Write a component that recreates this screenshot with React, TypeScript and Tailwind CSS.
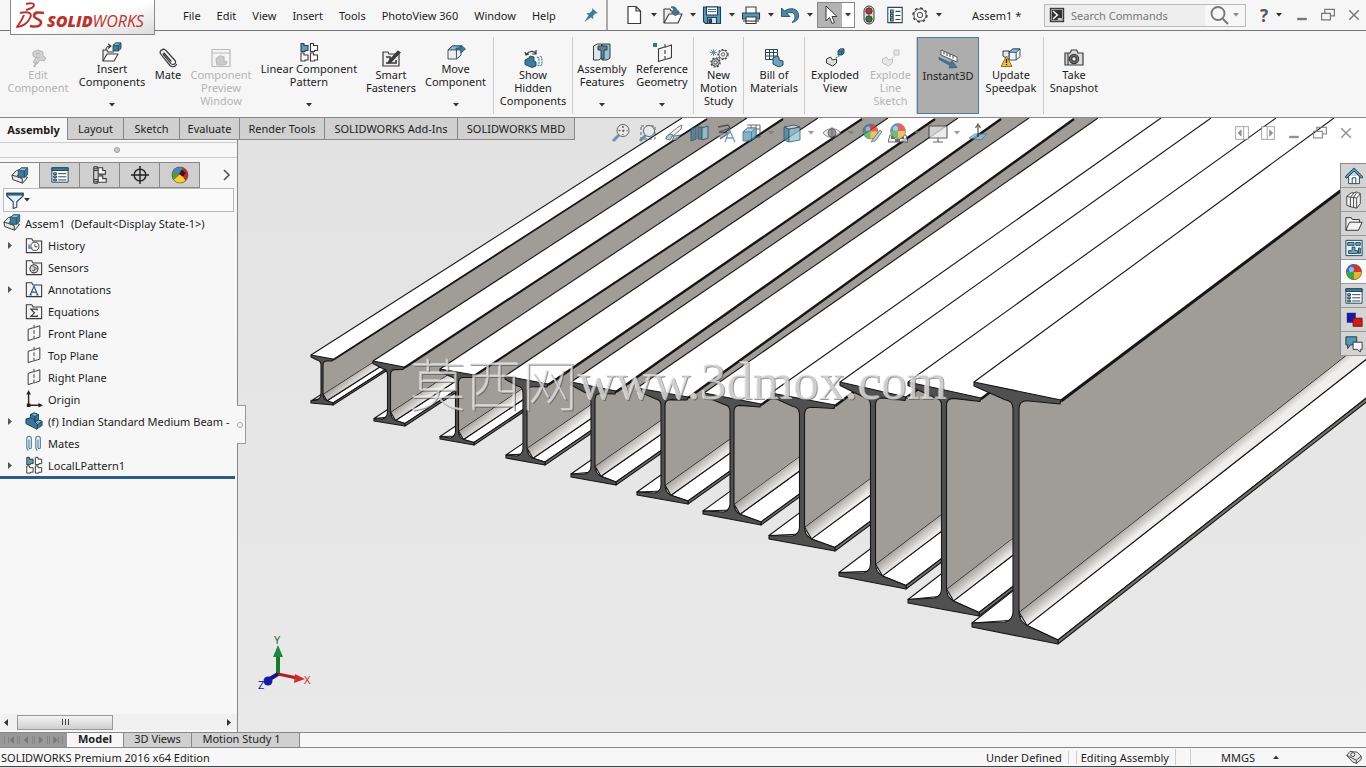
import type { ReactNode } from "react";

const INK = "#3a3a3a";
const BLUE = "#3d7c9c";
const SKY = "#8fc1d8";

// Small parts that several icons share
const gear = (cx: number, cy: number, r: number, fill = "#ddd") => (
  <g>
    <circle cx={cx} cy={cy} r={r} fill="none" stroke={INK} strokeWidth="1.200" strokeDasharray="1.800 1.800" />
    <circle cx={cx} cy={cy} r={r - 0.8} fill={fill} stroke={INK} strokeWidth=".8" />
    <circle cx={cx} cy={cy} r={r / 3} fill="#f6f6f6" stroke={INK} strokeWidth=".8" />
  </g>
);

const cube = (x: number, y: number, s: number, fill = BLUE) => (
  <g stroke="#24495c" strokeWidth=".9" strokeLinejoin="round">
    <path d={`M${x} ${y + s * 0.3}l${s * 0.35} ${-s * 0.3}h${s * 0.65}v${s * 0.7}l${-s * 0.35} ${s * 0.3}h${-s * 0.65}z`} fill={fill} />
    <path d={`M${x} ${y + s * 0.3}h${s * 0.65}l${s * 0.35} ${-s * 0.3}h${-s * 0.65}z`} fill={SKY} />
    <path d={`M${x + s * 0.65} ${y + s * 0.3}v${s * 0.7}`} />
  </g>
);

const ball = (cx: number, cy: number, r: number) => (
  <g>
    <circle cx={cx} cy={cy} r={r} fill="#d8322c" />
    <path d={`M${cx} ${cy}V${cy - r}A${r} ${r} 0 0 0 ${cx - r} ${cy}z`} fill="#3470c4" />
    <path d={`M${cx} ${cy}H${cx - r}A${r} ${r} 0 0 0 ${cx} ${cy + r}z`} fill="#3fa644" />
    <path d={`M${cx} ${cy}V${cy + r}A${r} ${r} 0 0 0 ${cx + r} ${cy}z`} fill="#e5b52b" />
    <circle cx={cx - r / 3} cy={cy - r / 3} r={r / 3} fill="#fff" opacity=".5" />
    <circle cx={cx} cy={cy} r={r} fill="none" stroke="#555" strokeWidth=".6" />
  </g>
);

const folder = (
  <path d="M1.500 18.500V3h6l1.500 2.500h9.500v13z" fill="#f4f4f4" stroke={INK} strokeWidth="1.200" />
);

const plane = (
  <g fill="none" stroke={INK} strokeWidth="1.100">
    <path d="M8 4.500L3.500 6v12.500L8 17M12 3.500L16.500 2v12.500L12 16" />
    <path d="M10 1v18" strokeDasharray="4 2" />
    <path d="M8 4.500l4-1M8 17l4-1" strokeDasharray="1.500 1" />
  </g>
);

const patternCell = (x: number, y: number, fill: string) => (
  <path d={`M${x} ${y}h3v2h4v5h-3v1h-4z`} fill={fill} stroke={INK} strokeWidth="1.1" />
);

const assembly = (
  <g strokeLinejoin="round" strokeWidth="1.1" stroke={INK}>
    <path d="M1 9l5-5 3.500-1v6l9 2.500-5.500 6.500L2 14z" fill="#e8e8e8" />
    <path d="M1 9l5 1.500 6.500 2.500v5M6 10.500l3-3" fill="none" />
    {cube(8, 1, 10.5)}
  </g>
);

const icons: Record<string, ReactNode> = {
  newDoc: <path d="M4 1.500h8l4.500 4.500v12.500H4zM12 1.500v4.500h4.500" fill="#fff" stroke={INK} strokeWidth="1.200" />,
  open: (
    <g stroke={INK} strokeWidth="1.100" strokeLinejoin="round">
      <path d="M1 18V4h6l1 2h7v4" fill="#eee" />
      <path d="M1 18l5-9h13l-4 9z" fill="#fafafa" />
      <path d="M8 2c4-1 6 1 6 5h2.500l-4 4-4-4H11c0-3-1-4-3-5z" fill={BLUE} stroke="#24495c" strokeWidth=".7" />
    </g>
  ),
  save: (
    <g stroke="#1f3f55" strokeWidth="1.100">
      <path d="M1.500 2h17v16.500H3.500l-2-2z" fill="#5d95b4" />
      <path d="M4.500 2h11v8h-11z" fill="#fff" />
      <path d="M6 4.500h8M6 6.500h8" stroke={BLUE} />
      <path d="M5.500 12.500h9v6h-9z" fill="#d7e4ea" />
      <path d="M7 14h2.500v4H7z" fill="#1f3f55" />
    </g>
  ),
  print: (
    <g stroke={INK} strokeWidth="1.100">
      <path d="M5 8V2h10v6" fill="#fff" />
      <path d="M1.500 8h17v6h-17z" fill="#4d9abb" />
      <path d="M5 12h10v6.500H5z" fill="#fff" />
      <path d="M2 16h16" />
    </g>
  ),
  undo: <path d="M1.500 3v8.500H10L7 8.500c4-2.500 8-.5 8 3.500 0 2-1 4-3 5.500 5-1 7-4 6.500-8C17.800 4 11 1.500 4.500 6z" fill="#4d87a8" stroke="#264d63" strokeWidth=".9" />,
  cursor: <path d="M6 1v15l3.500-3.500 2.500 6 2.500-1-2.500-6H17z" fill="#fff" stroke={INK} strokeWidth="1" />,
  traffic: (
    <g stroke={INK} strokeWidth="1">
      <rect x="5" y="1" width="10" height="18" rx="5" fill="#dcdcdc" />
      <circle cx="10" cy="6" r="3.200" fill="#c4302b" />
      <circle cx="10" cy="14" r="3.200" fill="#2f7d3b" />
    </g>
  ),
  options: (
    <g stroke="#27475c" strokeWidth="1.200" fill="#fff">
      <path d="M2 1.500h16v17H2z" />
      <path d="M5 4.500h3v3H5zM5 9h3v3H5zM5 13.500h3v3H5z" fill={SKY} />
      <path d="M10.500 6h5.500M10.500 10.500h5.500M10.500 15h5.500" />
    </g>
  ),
  gear: (
    <g fill="none" stroke={INK}>
      <circle cx="10" cy="10" r="7.800" strokeWidth="1.500" strokeDasharray="3 3.120" />
      <circle cx="10" cy="10" r="6.800" strokeWidth="1" fill="#f6f6f6" />
      <circle cx="10" cy="10" r="3" strokeWidth="1" />
    </g>
  ),
  pin: <path d="M12 1l7 6-3 .5-3.500 4 .5 4-3-2.500L1.500 19 7 10.500 4 8l4-.5 4-3.500z" fill={BLUE} stroke="#24607c" strokeWidth=".6" />,
  prompt: (
    <g>
      <path d="M1 1h18v18H1z" fill="#333" />
      <path d="M3 3h14v14H3z" fill="none" stroke="#eee" strokeWidth=".8" />
      <path d="M5 5l5.500 5L5 15M11 15h5" fill="none" stroke="#fff" strokeWidth="1.800" />
    </g>
  ),
  search: <path d="M14 14l5 5M9 2a6.500 6.500 0 1 1 0 13a6.500 6.500 0 0 1 0-13z" fill="none" stroke="#777" strokeWidth="1.900" />,
  editComponent: (
    <g fill="#d2d2d2" stroke="#b5b5b5">
      <path d="M5 4l5-2 5 2v4l3 2-2 3-4-1-3 4-4-2 3-4-3-2z" />
      <path d="M8 6l4-1M8 9l4 1" />
      <path d="M6 19l3-5" strokeWidth="2" />
    </g>
  ),
  insert: (
    <g stroke={INK} strokeWidth="1.100" strokeLinejoin="round">
      <path d="M1 19V8h4l1 2h6" fill="#eee" />
      <path d="M1 19l4-7h11l-4 7z" fill="#fff" />
      <path d="M4 8c0-3 2-4 4-4M6 2l3 2-3 2.500" fill="none" />
      {cube(11, 1, 8)}
    </g>
  ),
  mate: (
    <path d="M5 6l8 9.500a2.500 2.500 0 0 0 4-3L8 2.500a3.200 3.200 0 0 0-5 4l9 11a4 4 0 0 0 6.500-1M6 5l7 8" fill="none" stroke={INK} strokeWidth="1.200" strokeLinecap="round" />
  ),
  preview: (
    <g stroke="#bbb" strokeWidth="1.200" fill="#f4f4f4">
      <path d="M1 1.500h18v17H1zM1 5h18" />
      <path d="M5 11l4-3 4 1v4l3 1-2 3H6z" fill="#ccc" />
    </g>
  ),
  pattern: (
    <g>
      {patternCell(2, 1.5, "#5f9cae")}
      {patternCell(11.500, 1.5, "#fff")}
      {patternCell(2, 11, "#fff")}
      {patternCell(11.500, 11, "#fff")}
    </g>
  ),
  fasteners: (
    <g stroke={INK} strokeWidth="1.200" fill="none">
      <path d="M2 18V4h5l1 2h10v12z" fill="#eee" />
      <path d="M5 9h4v3M5 15h10v-3" strokeWidth="1.600" />
      <path d="M8 13L17 3l2 1.500-9 9.500-3 1z" fill={INK} />
    </g>
  ),
  move: (
    <g>
      {cube(2, 4, 13, "#eee")}
      <path d="M10 6h5V3l4.500 4-4.500 4V8h-5z" fill={BLUE} stroke="#24495c" strokeWidth=".7" />
    </g>
  ),
  showHidden: (
    <g>
      <path d="M3 7c2-4 8-5 10-1M13 2v4H9M2 4l1 3 3-1" fill="none" stroke={INK} strokeWidth="1.200" />
      <path d="M2 12l4-2 1-2 4 1v4l2 1v4l-4 1.500-7-3z" fill={BLUE} stroke="#24495c" />
      <path d="M14 9l2 1v7l-2 1.500M17.500 8l1.500 2v6l-1.500 2" fill="none" stroke={BLUE} strokeWidth="1.200" strokeDasharray="2 1" />
    </g>
  ),
  features: (
    <g stroke={INK} strokeWidth="1">
      <path d="M1.500 4l4-2h4v14l-3 2h-5z" fill="#dfe8ec" />
      <path d="M10 2h8v14l-3 2h-5z" fill="#9cc0d0" />
      <path d="M6 4h9v4h-3v9H9V8H6z" fill="#4d87a8" />
    </g>
  ),
  geometry: (
    <g>
      <path d="M1 1h4v4H1z" fill="#2f7f78" />
      <g transform="translate(3 1)">{plane}</g>
    </g>
  ),
  motion: (
    <g>
      {gear(14, 6.5, 5, "#f6f6f6")}
      {gear(6.500, 14.500, 4.6, "#bbb")}
      <path d="M4.500 1v7M1 4.500h7M2 2l5 5M7 2L2 7" stroke={BLUE} strokeWidth=".8" />
    </g>
  ),
  bom: (
    <g stroke="#27475c" strokeWidth="1">
      <path d="M1.500 1.500h12v10h-12zM1.500 4.500h12M1.500 8h12M5.500 1.500v10M9.500 1.500v10" fill="#fff" />
      <path d="M9 10l4-2 2 1v3l4 1v4l-4 2-6-3z" fill="#6fa3bb" />
    </g>
  ),
  exploded: (
    <g stroke={INK} strokeWidth="1">
      <path d="M1.500 11l4-2 2 3 4-1v4l-4 3-6-3z" fill="#ddd" />
      {cube(13, 1, 6)}
      <path d="M11 10l4-3" stroke={BLUE} strokeDasharray="1.500 1" strokeWidth="1.500" />
    </g>
  ),
  explodeLine: (
    <g stroke="#c2c2c2" fill="#e6e6e6">
      <path d="M1.500 11l4-2 2 3 4-1v4l-4 3-6-3zM13 2h5v5h-5z" />
      <path d="M11 10l4-3" strokeDasharray="1.500 1" />
    </g>
  ),
  instant: (
    <g>
      <path d="M3 1l16 7v5L3 6z" fill="#fff" stroke={INK} strokeWidth=".8" />
      <path d="M6 2.500v3M9 4v3M12 5v3M15 6.500v3" stroke={INK} strokeWidth="1" />
      <path d="M1 8.500l12 5.500 1-2.500 5 7-8 .5 1-2.500L1 10.500z" fill={BLUE} stroke="#24495c" strokeWidth=".5" />
    </g>
  ),
  speedpak: (
    <g>
      {cube(8, 1, 11, "#eef4f7")}
      <path d="M2 8V3h6v9z" fill="#dfe9ee" stroke={INK} />
      <path d="M5.500 8L11 18.500H0z" fill="#f3c037" stroke="#7d5a00" strokeWidth=".8" />
      <path d="M5.500 11v4M5.500 16v1.200" stroke="#222" strokeWidth="1.300" />
    </g>
  ),
  camera: (
    <g stroke={INK} strokeWidth="1.200">
      <path d="M1 5h5l1.500-3h5L14 5h5v12H1z" fill="#ddd" />
      <circle cx="10" cy="11" r="4.600" fill="#777" />
      <circle cx="10" cy="11" r="2.300" fill="#eee" />
      <path d="M4 5v12" />
    </g>
  ),
  assembly,
  property: (
    <g stroke="#27475c" strokeWidth="1.100" fill="#fff">
      <path d="M1 2h18v16H1z" />
      <path d="M1 2h18v3H1z" fill={BLUE} />
      <path d="M3 7.500h3v2H3zM3 11h3v2H3zM3 14.500h3v2H3z" fill={SKY} />
      <path d="M8 8.500h9M8 12h9M8 15.500h9" />
    </g>
  ),
  config: (
    <g stroke={INK} strokeWidth="1.200" fill="#f4f4f4">
      <path d="M3 1v18M3 5h5M3 15h5M3 1h4v2H3M3 17h4v2H3" />
      <path d="M8 2h5v3h3v4H8zM8 11h5v3h4v4H8z" />
    </g>
  ),
  target: (
    <g stroke="#222" strokeWidth="1.600" fill="none">
      <circle cx="10" cy="10" r="6.500" />
      <path d="M10 0v20M0 10h20" />
    </g>
  ),
  display: (
    <g>
      <circle cx="10" cy="10" r="9" fill="#c4262e" />
      <path d="M10 1a9 9 0 0 0-8.500 6L6 9l6-1 1-6.500z" fill="#4c86b8" />
      <path d="M1.500 7A9 9 0 0 0 3 15.500L9 9z" fill="#5a9a3c" />
      <path d="M3 15.500L11 8l5 8.500A9 9 0 0 1 3 15.500z" fill="#f5d02e" />
      <path d="M9 9l3-5 4.500 4L13 12z" fill="#3a1518" />
      <circle cx="10" cy="10" r="9" fill="none" stroke="#555" strokeWidth=".6" />
    </g>
  ),
  filter: (
    <g stroke="#27475c" strokeWidth="1.200">
      <path d="M1 2.500h18v3L12 12v6l-4 1.500V12L1 5.500z" fill="#e3f0f5" />
      <path d="M1 2.500h18v2H1z" fill={BLUE} />
    </g>
  ),
  history: (
    <g>
      {folder}
      <circle cx="11" cy="11.500" r="4.500" fill="#fff" stroke={INK} />
      <path d="M11 9v3h3" fill="none" stroke={INK} />
      <path d="M4.500 9.500v4h4" fill="none" stroke={BLUE} strokeWidth="1.500" />
    </g>
  ),
  sensors: (
    <g>
      {folder}
      <circle cx="10" cy="12" r="4.500" fill="#ddd" stroke={INK} strokeWidth="1.200" />
      <path d="M8.500 9.500l3 1-1.500 4-2-1M12 13l1.500-2" fill="none" stroke={INK} />
    </g>
  ),
  annotations: (
    <g>
      {folder}
      <path d="M6 16.500l4-9.500 4 9.500M7.500 13.500h5M5 16.500h2.500M12.500 16.500H15" fill="none" stroke="#2b5c8c" strokeWidth="1.300" />
    </g>
  ),
  equations: (
    <g>
      {folder}
      <path d="M13.500 9.500V8h-7l4 4-4 4h7v-1.500" fill="none" stroke={INK} strokeWidth="1.300" />
    </g>
  ),
  plane,
  origin: (
    <g>
      <path d="M4 3v14h12" fill="none" stroke="#3a2020" strokeWidth="1.600" />
      <path d="M4 0l2.500 5h-5zM20 17l-5-2.500v5zM2 15h4v4H2z" fill="#222" />
    </g>
  ),
  part: (
    <g stroke="#1f4257" strokeWidth="1" strokeLinejoin="round">
      <path d="M1 8l5-1.500V3l4-2 5 2v6l4 1.500V15l-6 4-12-6z" fill="#3a7797" />
      <path d="M6 3l5 2 4-2-5-2zM11 11l4-2 4 1.500-5 3.500z" fill="#7fb0c6" />
      <path d="M1 8l5-1.500 5 2V11l3 3-1 5M11 5v6" fill="none" />
    </g>
  ),
  mates: (
    <g fill="none" stroke="#3f7d8f" strokeWidth="1.200">
      <path d="M2 14V5a2.500 2.500 0 0 1 5 0v10a1.300 1.300 0 0 1-2.600 0V6M2 14c0 3 1 4 2 4" />
      <path d="M12 14V5a2.500 2.500 0 0 1 5 0v10a1.300 1.300 0 0 1-2.600 0V6M12 14c0 3 1 4 2 4" />
    </g>
  ),
  zoomFit: (
    <g>
      <path d="M8 12L2 18" stroke={BLUE} strokeWidth="3" />
      <circle cx="12" cy="7.500" r="6" fill="#eee" stroke={INK} />
      <path d="M12 3v9M7.500 7.500h9" stroke={INK} strokeDasharray="2 2" strokeWidth="1.500" />
    </g>
  ),
  zoomArea: (
    <g fill="none">
      <path d="M3 3h14v13H3z" stroke={INK} strokeDasharray="3 2" />
      <path d="M8 12L2 18" stroke={BLUE} strokeWidth="3" />
      <circle cx="11" cy="8" r="5.500" fill="#e4eef2" stroke={INK} />
    </g>
  ),
  prevView: (
    <g stroke={INK} strokeWidth=".9">
      <path d="M2 14L14 4l4-2-1 4-8 7z" fill="#f0f0f0" />
      <path d="M2 14l4-3 3 1-3 5-4-1zM10 13l7-1-4 5-5 1z" fill="#8fc1d8" />
    </g>
  ),
  section: (
    <g stroke="#24495c">
      <path d="M1 6l5-2v12l-5 2zM8 4h4v12H8z" fill={BLUE} />
      <path d="M12 5l6-2v12l-6 2z" fill={SKY} />
    </g>
  ),
  annoView: (
    <g fill="none" stroke={INK} strokeWidth="1.300">
      <path d="M2 4l10-2 2 3L3 9l10 1-9 6" fill="#999" />
      <path d="M9 19l4.500-12L19 19M11 15h6" stroke={BLUE} />
    </g>
  ),
  orient: (
    <g>
      <path d="M5 2h13v12H5M9 2v5M14 2v12M14 6h4" fill="none" stroke={INK} />
      {cube(1, 5, 13, "#5b9ab8")}
    </g>
  ),
  style: (
    <g stroke="#24495c">
      <path d="M2 4l5 2v13l-5-2z" fill="#4d87a8" />
      <path d="M7 6l11-2v13L7 19z" fill="#8fc1d8" />
      <path d="M2 4l10-2 6 2-11 2z" fill="#d5e8f0" />
    </g>
  ),
  eye: (
    <g stroke={INK} fill="none">
      <path d="M1 10c5-6 13-6 18 0-5 6-13 6-18 0z" fill="#ddd" opacity=".8" />
      <circle cx="10" cy="10" r="4" fill="#777" />
      <path d="M10 4v14" />
    </g>
  ),
  appearance: (
    <g>
      {ball(8.500, 8.500, 7.500)}
      <path d="M18 7l-7 9-2 3 4-1 7-9z" fill="#8fc1d8" stroke={INK} strokeWidth=".8" />
    </g>
  ),
  scene: (
    <g>
      <path d="M2 12h16l2 7H0z" fill="#eee" stroke={INK} />
      <path d="M3 13h4v3H3zM12 13h4v3h-4zM7 16h5v3H7z" fill={INK} />
      {ball(10, 8, 7.500)}
    </g>
  ),
  monitor: <path d="M1 3h18v12H1zM10 15v4M5 19h10" fill="#e6e6e6" stroke={INK} strokeWidth="1.200" />,
  normal: (
    <g>
      <path d="M1 15l6-4h12l-6 6z" fill={SKY} stroke={BLUE} />
      <path d="M10 14V2M7.500 5L10 1l2.500 4" fill="none" stroke={INK} strokeWidth="1.400" />
    </g>
  ),
  dockLeft: (
    <g stroke="#777">
      <path d="M2 2h16v16H2z" fill="#fff" />
      <path d="M9 6l-4 4 4 4z" fill="#777" />
      <path d="M12 2v16" />
    </g>
  ),
  dockRight: (
    <g stroke="#777">
      <path d="M2 2h16v16H2z" fill="#fff" />
      <path d="M12 6l4 4-4 4z" fill="#777" />
      <path d="M9 2v16" />
    </g>
  ),
  minimize: <path d="M4 15h12" stroke="#777" strokeWidth="3" />,
  restore: <path d="M6 8V3h12v8h-5M2 8h11v8H2z" fill="none" stroke="#777" strokeWidth="1.500" />,
  close: <path d="M4 4l12 12M16 4L4 16" stroke="#777" strokeWidth="1.800" />,
  home: (
    <g stroke="#27475c" strokeWidth="1.100">
      <path d="M4 10v8.500h12V10" fill="#fff" />
      <path d="M0 11L10 1l10 10-2 1.500-8-8-8 8z" fill="#4d9abb" />
      <path d="M8 18v-6h4v6" fill="none" />
    </g>
  ),
  library: (
    <g stroke={INK} strokeWidth="1" fill="#f4f4f4" strokeLinejoin="round">
      <path d="M2 6l5-4h3l3-1 4 2v11l-4 5-5-1-6-2z" />
      <path d="M2 6l4 1v11M6 7l4-5M6 7h3.500v11M9.500 7L13 2M9.500 7l3.500 1 4-5M13 8v11" fill="none" />
    </g>
  ),
  folderOpen: <path d="M1 17V3h6l1 2h8v3M1 17L5 8h14l-4 9z" fill="#f4f4f4" stroke={INK} strokeWidth="1.100" />,
  palette: (
    <g stroke="#27475c" strokeWidth="1.100">
      <path d="M1 1.500h18v17H1z" fill="#e3f0f5" />
      <path d="M3 4h7v3H3zM12 4h5v3h-5zM8 9h3v4h3v3H4v-3h4zM15 10h2v6h-2z" fill="#6fb0cc" />
    </g>
  ),
  ball: ball(10, 10, 8.500),
  squares: (
    <g>
      <path d="M2 2h10v11H2z" fill="#1a1a9c" />
      <path d="M9 8h10v9H9z" fill="#d01b1b" stroke="#7c0f0f" />
    </g>
  ),
  chat: (
    <g stroke={INK} strokeWidth="1.100">
      <path d="M1 2h12v9H6l-3 4v-4H1z" fill="#4d9abb" />
      <path d="M9 8h10v8h-2v3l-3-3H9z" fill="#fff" />
    </g>
  ),
  tag: (
    <g stroke={INK} strokeWidth="1.100" fill="#e6e6e6" strokeLinejoin="round">
      <path d="M1 8l4-5 9 1 5 5v4l-6 5-5-2z" />
      <path d="M1 8l12 6 6-5M13 14v4" fill="none" />
      <circle cx="8.500" cy="7" r="2.500" />
    </g>
  ),
};

function Icon({ name, className = "size-5" }: { name: string; className?: string }) {
  return (
    <svg viewBox="0 0 20 20" className={`shrink-0 ${className}`} aria-hidden="true">
      {icons[name]}
    </svg>
  );
}

function Caret({ className = "text-[#333]" }: { className?: string }) {
  return (
    <svg viewBox="0 0 6 4" className={`h-1 w-1.5 shrink-0 ${className}`} aria-hidden="true">
      <path d="M0 0h6L3 3.500z" fill="currentColor" />
    </svg>
  );
}

function Logo() {
  return (
    <div className="absolute left-[10px] top-0 z-10 flex h-[35px] w-[145px] items-center border border-t-0 border-[#888] bg-gradient-to-br from-white via-white to-[#dcdcdc] pl-1">
      <svg viewBox="0 0 30 30" className="h-[30px] w-[30px] shrink-0" aria-hidden="true">
        <g fill="none" stroke="#b8352f" strokeLinejoin="round">
          <path d="M11 2c4-1 8-1 8 1 0 2-4 4-8 5" strokeWidth="2" />
          <path d="M5 11c8-2 13 0 10 5-2 5-8 9-13 9 3-4 5-7 7-12" strokeWidth="2" />
          <path d="M29 11c-5-1-10-1-10 3 0 3 8 3 7 7-1 4-6 4-11 3" strokeWidth="2.600" />
        </g>
      </svg>
      <span className="ml-0.5 mt-2 font-['Open_Sans',sans-serif] text-base italic leading-4 text-[#b8352f]">
        <b className="font-extrabold">SOLID</b>WORKS
      </span>
    </div>
  );
}

const menus = ["File", "Edit", "View", "Insert", "Tools", "PhotoView 360", "Window", "Help"];
const quickTools = ["newDoc", "open", "save", "print", "undo"];

function TitleBar() {
  return (
    <header className="relative flex h-[31px] items-center border-b border-[#777]">
      <Logo />
      <nav className="flex h-full w-[608px] shrink-0 items-center border-r-2 border-[#aaa] pl-[175px]">
        {menus.map((m) => (
          <button key={m} className="whitespace-nowrap px-2">{m}</button>
        ))}
        <button aria-label="Pin menu" className="ml-auto mr-2"><Icon name="pin" className="size-3.5" /></button>
      </nav>
      <div className="ml-4 flex shrink-0 items-center">
        {quickTools.map((t) => (
          <div key={t} className="flex w-[39px] items-center gap-[7px]">
            <button aria-label={t}><Icon name={t} /></button>
            <Caret />
          </div>
        ))}
        <div className="-ml-[2px] flex h-[26px] w-[38px] border border-[#888] bg-white">
          <button aria-label="Select" className="flex w-6 items-center justify-center bg-[#b3b3b3]"><Icon name="cursor" /></button>
          <button aria-label="Select options" className="flex flex-1 items-center justify-center"><Caret /></button>
        </div>
        <div className="ml-1 flex items-center gap-[7px]">
          <button aria-label="Rebuild"><Icon name="traffic" /></button>
          <button aria-label="File properties"><Icon name="options" className="size-[18px]" /></button>
          <button aria-label="Options"><Icon name="gear" className="size-[18px]" /></button>
          <Caret />
        </div>
      </div>
      <h1 className="ml-[30px] whitespace-nowrap">Assem1 *</h1>
      <div className="ml-auto flex items-center">
        <label className="flex h-[23px] w-[202px] items-center border border-[#bbb] bg-[#eee] pl-1">
          <Icon name="prompt" className="size-4" />
          <input aria-label="Search Commands" placeholder="Search Commands" className="ml-1 w-[136px] bg-transparent pl-0.5 outline-none placeholder:text-[#777]" />
          <span className="flex h-full flex-1 items-center gap-1 bg-[#f7f7f7] pl-1"><Icon name="search" /><Caret className="text-[#888]" /></span>
        </label>
        <button className="ml-1.5 w-6 text-[17px] font-bold text-[#555]">?</button>
        <Caret />
        <div className="ml-3 mr-1 flex gap-2.5">
          {["minimize", "restore", "close"].map((n) => (
            <button key={n} aria-label={n}><Icon name={n} className="size-4" /></button>
          ))}
        </div>
      </div>
    </header>
  );
}

type Command = { label: string; icon: string; width: string; menu?: boolean; disabled?: boolean; active?: boolean; end?: boolean };

const commands: Command[] = [
  { label: "Edit\nComponent", icon: "editComponent", width: "w-[76px]", disabled: true },
  { label: "Insert\nComponents", icon: "insert", width: "w-[72px]", menu: true },
  { label: "Mate", icon: "mate", width: "w-[40px]" },
  { label: "Component\nPreview\nWindow", icon: "preview", width: "w-[66px]", disabled: true },
  { label: "Linear Component\nPattern", icon: "pattern", width: "w-[110px]", menu: true },
  { label: "Smart\nFasteners", icon: "fasteners", width: "w-[54px]" },
  { label: "Move\nComponent", icon: "move", width: "w-[76px]", menu: true, end: true },
  { label: "Show\nHidden\nComponents", icon: "showHidden", width: "w-[79px]", end: true },
  { label: "Assembly\nFeatures", icon: "features", width: "w-[58px]", menu: true },
  { label: "Reference\nGeometry", icon: "geometry", width: "w-[63px]", menu: true, end: true },
  { label: "New\nMotion\nStudy", icon: "motion", width: "w-[50px]", end: true },
  { label: "Bill of\nMaterials", icon: "bom", width: "w-[61px]", end: true },
  { label: "Exploded\nView", icon: "exploded", width: "w-[60px]" },
  { label: "Explode\nLine\nSketch", icon: "explodeLine", width: "w-[52px]", disabled: true, end: true },
  { label: "Instant3D", icon: "instant", width: "w-[62px]", active: true },
  { label: "Update\nSpeedpak", icon: "speedpak", width: "w-[65px]", end: true },
  { label: "Take\nSnapshot", icon: "camera", width: "w-[60px]" },
];

function Ribbon() {
  return (
    <div className="flex h-[87px] border-b border-[#888] pb-[3px] pt-[6px]">
      {commands.map((c) => (
        <button
          key={c.label}
          disabled={c.disabled}
          className={`flex shrink-0 flex-col items-center ${c.width} ${c.menu ? "pt-[5px]" : "pt-[11px]"} ${
            c.disabled ? "text-[#b4b4b4]" : ""
          } ${c.end ? "border-r border-[#ccc]" : ""} ${c.active ? "border border-[#4f7c98] bg-[#adadad]" : ""}`}
        >
          <Icon name={c.icon} />
          <span className="whitespace-pre text-center leading-[13px]">{c.label}</span>
          {c.menu && <span className="mt-auto pb-[7px]"><Caret /></span>}
        </button>
      ))}
    </div>
  );
}

const managerTabs = [
  ["Layout", "w-[56px]"],
  ["Sketch", "w-[56px]"],
  ["Evaluate", "w-[60px]"],
  ["Render Tools", "w-[85px]"],
  ["SOLIDWORKS Add-Ins", "w-[133px]"],
  ["SOLIDWORKS MBD", "w-[117px]"],
];

// Front face of each beam. l/r: top flange corners, web: x of the web,
// base: y where the web ends, bl/br: bottom flange corners,
// lt/rt: where the top flange edges leave the upper side of the view.
type Beam = { l: number[]; r: number[]; web: number; w: number; base: number; bl: number[]; br: number[]; lt: number; rt: number };

const beams: Beam[] = [
  { l: [311, 355], r: [333, 359], web: 322, w: 2, base: 398, bl: [311, 402], br: [333, 405], lt: 682, rt: 707 },
  { l: [373, 361], r: [404, 367], web: 389, w: 3, base: 417, bl: [374, 420], br: [405, 426], lt: 747, rt: 783 },
  { l: [440, 369], r: [474, 375], web: 457, w: 3, base: 436, bl: [440, 438], br: [474, 445], lt: 818, rt: 862 },
  { l: [505, 376], r: [548, 384], web: 525, w: 4, base: 454, bl: [506, 457], br: [545, 465], lt: 888, rt: 935 },
  { l: [571, 382], r: [616, 391], web: 593, w: 4, base: 472, bl: [571, 476], br: [616, 485], lt: 958, rt: 1001 },
  { l: [637, 388], r: [688, 397], web: 663, w: 4, base: 491, bl: [637, 494], br: [688, 504], lt: 1029, rt: 1074 },
  { l: [704, 393], r: [761, 404], web: 732, w: 4, base: 510, bl: [703, 513], br: [761, 525], lt: 1098, rt: 1162 },
  { l: [771, 393], r: [835, 405], web: 802, w: 5, base: 534, bl: [769, 538], br: [835, 551], lt: 1161, rt: 1220 },
  { l: [840, 382], r: [906, 397], web: 873, w: 5, base: 571, bl: [839, 575], br: [906, 589], lt: 1211, rt: 1280 },
  { l: [908, 382], r: [981, 398], web: 944, w: 5, base: 596, bl: [908, 602], br: [979, 616], lt: 1276, rt: 1350 },
  { l: [974, 382], r: [1061, 400], web: 1016, w: 6, base: 620, bl: [972, 626], br: [1058, 644], lt: 1334, rt: 1436 },
];

function BeamShape({ beam, index }: { beam: Beam; index: number }) {
  const { l, r, web, w, base, bl, br, lt, rt } = beam;
  const slope = 0.64 + index * 0.0145;
  const far = (x: number, y: number) => `${x + 700} ${y - 700 * slope}`;
  const h = w / 2;
  const k = 2 + w; // fillet size
  const t = 1 + w / 2; // flange tip thickness
  const joint = l[1] + ((r[1] - l[1]) * (web - l[0])) / (r[0] - l[0]) + t + w;
  const toe = base - k; // where the web meets its lower fillet
  const foot = web + h + k;
  const seat = base + k * 0.7;

  return (
    <g stroke="#161616" strokeWidth="1.100" strokeLinejoin="round">
      <path d={`M${bl[0]} ${bl[1] - t + 1}L${far(bl[0], bl[1] - t + 1)}L${far(web, base)}L${web} ${base}z`} fill="#fff" />
      <path d={`M${foot} ${seat}L${far(foot, seat)}L${far(br[0], br[1] - t)}L${br[0]} ${br[1] - t}z`} fill="#fff" />
      <path d={`M${web + h} ${toe}L${far(web + h, toe)}L${far(foot, seat)}L${foot} ${seat}z`} fill={`url(#fillet${index})`} />
      <path d={`M${br[0]} ${br[1] - t}L${far(br[0], br[1] - t)}L${far(br[0], br[1])}L${br[0]} ${br[1]}z`} fill="#77736f" />
      <path
        d={`M${web} ${joint}L${r[0]} ${r[1]}L${rt} 118L${far(rt + 200, 118)}L${far(web + h, toe)}L${web + h} ${toe}z`}
        fill="#a09d99"
        stroke="none"
      />
      <path d={`M${l[0]} ${l[1]}L${lt} 118H${rt}L${r[0]} ${r[1]}z`} fill="#fff" stroke="none" />
      <path d={`M${l[0]} ${l[1]}L${lt} 118`} />
      <path d={`M${r[0]} ${r[1] + 1}L${rt} 119`} strokeWidth={1.2 + w * 0.3} />
      <path
        d={`M${l[0]} ${l[1]}L${r[0]} ${r[1]}L${r[0] - 1} ${r[1] + t}L${foot} ${joint}Q${web + h} ${joint} ${web + h} ${joint + k}
          V${toe}Q${web + h} ${base + 1} ${foot} ${seat}L${br[0]} ${br[1] - t}V${br[1]}L${bl[0]} ${bl[1] + 1}V${bl[1] - t + 1}
          L${web - h - k} ${base + 2}Q${web - h} ${base} ${web - h} ${toe}V${joint + k}Q${web - h} ${joint} ${web - h - k} ${joint - 1}L${l[0]} ${l[1] + t}z`}
        fill="#505050"
      />
      {/* Shading of the rounded corner, across the direction of the beam */}
      <defs>
        <linearGradient id={`fillet${index}`} gradientUnits="userSpaceOnUse" x1={web + h} y1={toe} x2={web + h + 9} y2={toe + 11}>
          <stop offset="0" stopColor="#a09d99" />
          <stop offset="1" stopColor="#f0eeec" />
        </linearGradient>
      </defs>
    </g>
  );
}

function Scene() {
  return (
    <svg viewBox="0 118 1366 614" preserveAspectRatio="xMinYMin slice" className="absolute inset-0 h-full w-full" role="img" aria-label="Eleven I-beams">
      <defs>
        <linearGradient id="backdrop" x1="0" y1="0" x2="0" y2="1">
          <stop offset="0" stopColor="#e2e2e2" />
          <stop offset="1" stopColor="#e9e9e9" />
        </linearGradient>
      </defs>
      <rect y="118" width="1366" height="614" fill="url(#backdrop)" />
      {beams.map((b, i) => (
        <BeamShape key={b.web} beam={b} index={i} />
      ))}
      <g strokeWidth="3" fontFamily="'Noto Sans', sans-serif" fontSize="11">
        <path d="M278 674V654" stroke="#1a7a2a" strokeWidth="4" />
        <path d="M278 645l5 12h-10z" fill="#1a8a3a" />
        <path d="M278 674l19 4" stroke="#b02020" />
        <path d="M305 679l-10-5-1 9z" fill="#d03030" />
        <path d="M278 674l-10 6" stroke="#15157a" strokeWidth="4" />
        <circle cx="268" cy="681" r="4.500" fill="#1a1aa8" />
        <text x="274" y="644" fill="#2c6b36">Y</text>
        <text x="304" y="684" fill="#c03030">X</text>
        <text x="258" y="689" fill="#20209a">Z</text>
      </g>
    </svg>
  );
}

const tree = [
  { label: "History", icon: "history", open: true },
  { label: "Sensors", icon: "sensors" },
  { label: "Annotations", icon: "annotations", open: true },
  { label: "Equations", icon: "equations" },
  { label: "Front Plane", icon: "plane" },
  { label: "Top Plane", icon: "plane" },
  { label: "Right Plane", icon: "plane" },
  { label: "Origin", icon: "origin" },
  { label: "(f) Indian Standard Medium Beam -", icon: "part", open: true },
  { label: "Mates", icon: "mates" },
  { label: "LocalLPattern1", icon: "pattern", open: true },
];

function FeatureTree() {
  return (
    <aside className="relative flex w-[238px] flex-col border-r border-[#888] bg-[#f7f7f7]">
      <div className="mt-[2px] flex h-4 items-center justify-center border-y border-[#ccc] pr-1">
        <span className="size-1.5 rounded-full border border-[#999] bg-[#ccc]" />
      </div>
      <div className="mt-1 flex h-[26px]">
        {["assembly", "property", "config", "target", "display"].map((n, i) => (
          <button
            key={n}
            aria-label={n}
            className={`flex w-10 items-center justify-center border-r border-t border-[#888] ${i === 0 ? "" : "border-b bg-[#cfcfcf]"}`}
          >
            <Icon name={n} className="size-[18px]" />
          </button>
        ))}
        <button aria-label="More tabs" className="ml-auto mr-1.5 flex items-center">
          <svg viewBox="0 0 8 12" className="h-3 w-2" aria-hidden="true">
            <path d="M1 1l5 5-5 5" fill="none" stroke="#555" strokeWidth="1.600" />
          </svg>
        </button>
      </div>
      <div className="mx-[3px] flex h-6 items-center border border-[#bbb] bg-[#fafafa] pl-0.5">
        <Icon name="filter" className="size-[18px]" />
        <Caret />
        <input aria-label="Filter tree" className="min-w-0 flex-1 bg-transparent outline-none" />
      </div>
      <div className="flex h-[22px] items-center gap-1 whitespace-pre pl-[3px]">
        <Icon name="assembly" className="size-[18px]" />
        <span>Assem1  (Default&lt;Display State-1&gt;)</span>
      </div>
      <ul>
        {tree.map((n) => (
          <li key={n.label} className="flex h-[22px] items-center">
            <span className="w-[25px] pl-2">
              {n.open && (
                <svg viewBox="0 0 4 7" className="h-[7px] w-1" aria-hidden="true">
                  <path d="M0 0l4 3.500L0 7z" fill="#555" />
                </svg>
              )}
            </span>
            <Icon name={n.icon} className="size-[18px]" />
            <span className="ml-[5px] whitespace-nowrap">{n.label}</span>
          </li>
        ))}
      </ul>
      <div className="mr-0.5 h-[3px] bg-[#2d5c8c]" />
      <div className="mt-auto mb-[2px] flex h-4 items-center bg-[#f0f0f0] px-1">
        <svg viewBox="0 0 4 7" className="h-[7px] w-1" aria-hidden="true"><path d="M4 0L0 3.500 4 7z" fill="#333" /></svg>
        <div className="ml-[9px] flex h-[15px] w-24 items-center justify-center gap-0.5 border border-[#999] bg-gradient-to-b from-[#f4f4f4] to-[#cfcfcf]">
          <i className="h-1.5 w-px bg-[#444]" />
          <i className="h-1.5 w-px bg-[#444]" />
          <i className="h-1.5 w-px bg-[#444]" />
        </div>
        <svg viewBox="0 0 4 7" className="ml-auto mr-[2px] h-[7px] w-1" aria-hidden="true"><path d="M0 0l4 3.500L0 7z" fill="#333" /></svg>
      </div>
      {/* Splitter handle that sticks out over the view */}
      <div className="absolute -right-[9px] top-[265px] flex h-[39px] w-[9px] items-center border border-l-0 border-[#999] bg-[#f7f7f7]">
        <span className="size-1.5 rounded-full border border-[#aaa]" />
      </div>
    </aside>
  );
}

const viewTools = [
  { icon: "zoomFit", cell: "w-[27px]" },
  { icon: "zoomArea", cell: "w-[26px]" },
  { icon: "prevView", cell: "w-[26px]" },
  { icon: "section", cell: "w-[26px]" },
  { icon: "annoView", cell: "w-[26px]" },
  { icon: "orient", cell: "w-[40px]", menu: true },
  { icon: "style", cell: "w-[40px]", menu: true },
  { icon: "eye", cell: "w-[40px]", menu: true },
  { icon: "appearance", cell: "w-[26px]" },
  { icon: "scene", cell: "w-[40px]", menu: true },
  { icon: "monitor", cell: "w-[40px]", menu: true },
  { icon: "normal", cell: "w-[26px]" },
];

function ViewOverlays() {
  return (
    <>
      <div className="absolute left-[611px] top-[5px] flex opacity-75">
        {viewTools.map((t) => (
          <button key={t.icon} aria-label={t.icon} className={`flex items-center gap-1.5 ${t.cell}`}>
            <Icon name={t.icon} />
            {t.menu && <Caret className="text-[#777]" />}
          </button>
        ))}
      </div>
      <div className="absolute right-3 top-[7px] flex gap-2.5 opacity-80">
        {["dockLeft", "dockRight", "minimize", "restore", "close"].map((n) => (
          <button key={n} aria-label={n}><Icon name={n} className="size-4" /></button>
        ))}
      </div>
      <div className="absolute right-0 top-[45px] w-[26px] border-l border-t border-[#888]">
        {["home", "library", "folderOpen", "palette", "ball", "property", "squares", "chat"].map((n) => (
          <button
            key={n}
            aria-label={n}
            className={`flex h-6 w-full items-center justify-center border-b border-[#999] ${n === "ball" ? "bg-[#fafafa]" : "bg-[#d4d4d4]"}`}
          >
            <Icon name={n} className="size-[18px]" />
          </button>
        ))}
      </div>
      <div className="absolute left-[410px] top-[234px] flex items-center whitespace-nowrap leading-[60px] text-[#e6e6e6]/70 [text-shadow:1px_1px_0_rgba(80,80,80,0.6),-1px_-1px_0_rgba(255,255,255,0.5)]">
        <span className="font-['Noto_Sans_CJK_SC',sans-serif] text-[56px] font-thin">莫西网</span>
        <span className="font-['Liberation_Serif',serif] text-[52px]">www.3dmox.com</span>
      </div>
    </>
  );
}

function StatusBar() {
  return (
    <footer className="bg-[#f7f7f7]">
      <div className="flex h-4 border-y border-[#888] text-[#222]">
        <div className="flex w-[67px] items-center justify-around bg-[#999] px-1 text-[#777]">
          {["M2 1v8M8 1L4 5l4 4z", "M7 1L3 5l4 4z", "M3 1l4 4-4 4z", "M8 1v8M2 1l4 4-4 4z"].map((d) => (
            <button key={d} aria-label="Scroll tabs" className="border-x border-[#858585] px-0.5">
              <svg viewBox="0 0 10 10" className="size-2" aria-hidden="true"><path d={d} fill="currentColor" stroke="currentColor" /></svg>
            </button>
          ))}
        </div>
        <button className="w-[57px] border-r border-[#888] pb-0.5 font-bold leading-3">Model</button>
        <button className="w-[68px] border-r border-[#888] bg-[#d0d0d0] pb-0.5 leading-3">3D Views</button>
        <button className="w-[108px] border-r border-[#888] bg-[#d0d0d0] pb-0.5 pr-2 leading-3">Motion Study 1</button>
      </div>
      <div className="flex h-[19px] items-center border-b border-[#444] pl-px">
        <span>SOLIDWORKS Premium 2016 x64 Edition</span>
        <span className="ml-auto border-r border-[#ccc] pr-[6px]">Under Defined</span>
        <span className="ml-[7px] border-l border-[#ccc] pl-1 pr-[6px]">Editing Assembly</span>
        <span className="h-4 w-4 border-x border-[#ccc]" />
        <button className="ml-[30px] mr-[18px]">MMGS</button>
        <span className="rotate-180"><Caret /></span>
        <span className="ml-[67px] mr-1"><Icon name="tag" className="size-4" /></span>
      </div>
      <div className="h-px bg-[#ddd]" />
    </footer>
  );
}

export default function App() {
  return (
    <div className="flex h-screen min-h-[600px] flex-col overflow-hidden bg-[#f6f6f6] font-['Noto_Sans',sans-serif] text-[11px] leading-[13px] text-[#1c1c1c]">
      <TitleBar />
      <Ribbon />
      <main className="relative flex min-h-0 flex-1 flex-col overflow-hidden">
        <Scene />
        <div className="relative flex h-[22px]">
          <button className="w-[68px] border-r border-[#888] bg-[#f7f7f7] font-bold">Assembly</button>
          {managerTabs.map(([label, width]) => (
            <button key={label} className={`whitespace-nowrap border-b border-r border-[#888] bg-[#d0d0d0] ${width}`}>{label}</button>
          ))}
        </div>
        <div className="relative flex flex-1"><FeatureTree /></div>
        <ViewOverlays />
      </main>
      <StatusBar />
    </div>
  );
}
